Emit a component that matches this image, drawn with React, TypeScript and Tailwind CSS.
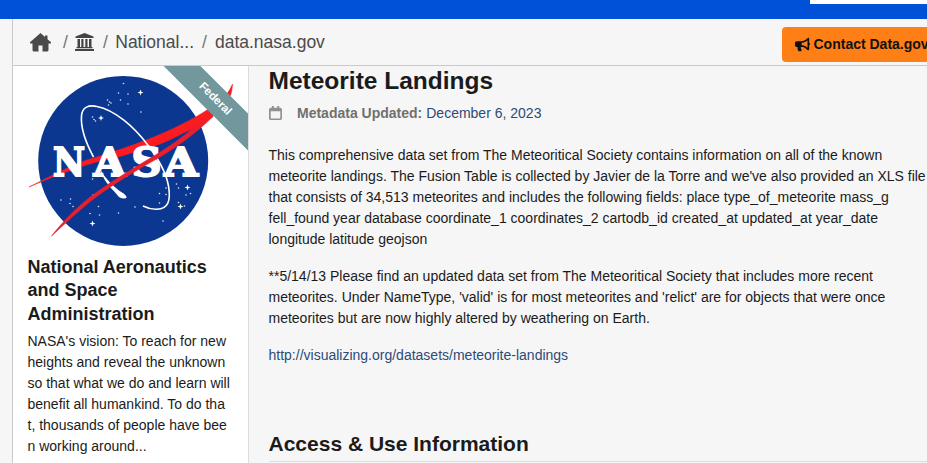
import { FaBullhorn } from "react-icons/fa";

const stars: [number, number][] = [
  [123.5, 83.5], [118.5, 93], [128, 94], [120.5, 100], [128, 104], [141, 112], [107.5, 100], [109.5, 102], [111, 103], [108.5, 105],
  [92.5, 117], [94, 119.5], [95.5, 121], [92.5, 179], [93, 195], [61, 200], [70.5, 199], [70, 203.5], [73, 206.5], [84, 203.5],
  [98.5, 206.5], [90, 213.5], [99.5, 215], [118.5, 213], [135, 207], [163, 221], [166, 188], [166, 194.5], [159.5, 193.5], [159.5, 203],
  [176.5, 184], [178.5, 188], [190.5, 193.5], [186, 195], [178.5, 202.5], [184.5, 206],
];
const brightStars: [number, number][] = [[140.5, 92.5], [101, 118], [92.5, 223.5], [187.5, 187.5], [180.5, 206.5]];

function NasaLogo() {
  return (
    <svg className="block h-[184px] w-[235px]" viewBox="13 66 235 184" role="img" aria-label="NASA">
      <circle cx="123.2" cy="160.9" r="85" fill="#0b3791" />
      {stars.map(([x, y]) => <circle key={`${x}-${y}`} cx={x} cy={y} r="0.8" fill="#dfe6f4" />)}
      {brightStars.map(([x, y]) => (
        <path key={`${x}-${y}`} fill="#fff" transform={`translate(${x} ${y})`} d="M0-3 .8-.8 3 0 .8.8 0 3-.8.8-3 0-.8-.8Z" />
      ))}
      <path fill="#fb1c22" stroke="#fb1c22" strokeWidth="0.5" d="M29 187C51 176 72 165 87 160C110 153 131 146 150 138.5C174 129 193 119 207 110C219 102 227 97 232.5 84C232 96 229 103 212 117C205 122 199 126 191 129.5C180 134 171 140 160 144C147 149 134 152 120 156.5C105 160 90 163 76 168.5C60 174 45 180 29 187Z" />
      <g fill="#fff" stroke="#fff" strokeWidth="2" fontSize="40" fontWeight="700" className="font-['DejaVu_Serif',serif]">
        <text x="53" y="176" textLength="32" lengthAdjust="spacingAndGlyphs">N</text>
        <text x="93.500" y="176" textLength="32" lengthAdjust="spacingAndGlyphs">A</text>
        <text x="131.500" y="176" textLength="30" lengthAdjust="spacingAndGlyphs">S</text>
        <text x="164" y="176" textLength="34" lengthAdjust="spacingAndGlyphs">A</text>
      </g>
      <path fill="none" stroke="#fff" strokeWidth="1.6" d="M93.5 157C86 143 80.500 128 81.500 116C82 107 89 104.500 97 106.500C115 110 134 127 147 144C158 158 166 172 168.500 186C171 201 168 209 157 209.300C152 209.500 147 208 143 206" />
      <path fill="#fff" d="M100 169C105 178 113 186.500 122 192.500C127 195.500 128 198.500 124.500 198.500C120.500 198.500 118.500 197 116.500 194C110 187 103 180 100 169Z" />
      <path fill="#e81f2d" stroke="#e81f2d" strokeWidth="0.6" d="M51.500 236C65 219 80 204 97 192C115 179 134 168 153 156.500C169 147 180 139 192 129C200 124 207 120 213 116.500C195 134 178 146 160 157C139 169 120 180 103 192C83 206 67 222 51.500 236Z" />
    </svg>
  );
}

function HomeIcon() {
  return (
    <svg className="mr-3 h-[19px] w-[21px]" viewBox="0 0 21 19" fill="#4a4a4a">
      <path d="M10.500 0 15 4V2.500H17.500V6.300L21 9.300V10.500H18.500V17Q18.500 18.500 17 18.500H12.500V12.500H8.500V18.500H4Q2.500 18.500 2.500 17V10.500H0V9.300Z" />
    </svg>
  );
}

function BankIcon() {
  return (
    <svg className="h-[18px] w-[19px]" viewBox="0 0 19 18" fill="#444">
      <path d="M9.5 0 18.500 3.500V5H.5V3.500ZM2.500 6H5V14H2.500ZM6.300 6H8.500V14H6.300ZM10.300 6H12.500V14H10.300ZM14 6H16.500V14H14ZM1.500 14H17.500V15.300H1.500ZM0 16H19V18H0Z" />
    </svg>
  );
}

function CalendarIcon() {
  return (
    <svg className="mr-[15.5px] h-[14px] w-[13px]" viewBox="0 0 13 15" preserveAspectRatio="none" fill="#919191">
      <path fillRule="evenodd" d="M2 2H2.800V0H4.800V2H8.200V0H10.200V2H11Q13 2 13 4V13Q13 15 11 15H2Q0 15 0 13V4Q0 2 2 2ZM1.700 5.500V12.500Q1.700 13.300 2.500 13.300H10.500Q11.300 13.300 11.300 12.500V5.500Z" />
    </svg>
  );
}

function Slash() {
  return <span className="text-[#757575]">/</span>;
}

export default function App() {
  return (
    <div className="flex h-[463px] w-[927px] flex-col overflow-hidden bg-[#f6f6f6] font-['Liberation_Sans',Arial,sans-serif] text-[#1b1b1b]">
      <div className="flex h-[19px] shrink-0 items-start justify-end bg-[#0050d8]">
        <div className="h-1 w-[117px] bg-white" />
      </div>
      <div className="ml-3 flex min-h-0 flex-1 flex-col border-l border-[#c9c9c9]">
        <header className="flex h-[47px] shrink-0 items-center justify-between border-b border-[#c9c9c9]">
          <nav className="flex items-center pl-[17px] pt-px text-[17.5px] leading-none text-[#4a4a4a]">
            <HomeIcon />
            <Slash />
            <span className="-mt-[2px] ml-[7px] mr-[9px]"><BankIcon /></span>
            <Slash />
            <span className="ml-[7.5px] mr-[8px]">National...</span>
            <Slash />
            <span className="ml-[8px]">data.nasa.gov</span>
          </nav>
          <button className="mt-[5px] flex h-[35px] w-[145px] shrink-0 items-center rounded-l-[4px] bg-[#ff7f17] pb-px pl-[13px] text-sm font-bold text-[#111] whitespace-nowrap">
            <FaBullhorn className="mr-[3.5px] size-[15px] shrink-0" />
            Contact Data.gov
          </button>
        </header>
        <div className="flex min-h-0 flex-1">
          <aside className="relative w-[236px] shrink-0 overflow-hidden border-r border-[#dcdcdc] bg-white">
            <NasaLogo />
            <div className="absolute left-[122px] top-5 flex h-[26px] w-[160px] rotate-45 items-center justify-center bg-[#72989e] text-[11.5px] font-bold text-white">Federal</div>
            <div className="px-[14.5px]">
              <h2 className="mt-[5.700px] text-[18px] font-bold leading-[23.4px]">National Aeronautics<br />and Space<br />Administration</h2>
              <p className="mt-[5.100px] whitespace-nowrap text-sm leading-[21px]">
                NASA's vision: To reach for new<br />heights and reveal the unknown<br />so that what we do and learn will<br />benefit all humankind. To do tha<br />t, thousands of people have bee<br />n working around...
              </p>
            </div>
          </aside>
          <main className="min-w-0 flex-1 pl-[19.5px]">
            <h1 className="text-[24.500px] font-bold leading-[30px]">Meteorite Landings</h1>
            <div className="mt-[7px] flex h-5 items-center text-sm">
              <CalendarIcon />
              <b className="mr-1 text-[#71706e]">Metadata Updated:</b>
              <span className="text-[#2e4a78]">December 6, 2023</span>
            </div>
            <div className="mt-[22px] whitespace-nowrap text-sm leading-[21px]">
              <p>
                This comprehensive data set from The Meteoritical Society contains information on all of the known<br />meteorite landings. The Fusion Table is collected by Javier de la Torre and we've also provided an XLS file<br />that consists of 34,513 meteorites and includes the following fields: place type_of_meteorite mass_g<br />fell_found year database coordinate_1 coordinates_2 cartodb_id created_at updated_at year_date<br />longitude latitude geojson
              </p>
              <p className="mt-4">
                **5/14/13 Please find an updated data set from The Meteoritical Society that includes more recent<br />meteorites. Under NameType, 'valid' is for most meteorites and 'relict' are for objects that were once<br />meteorites but are now highly altered by weathering on Earth.
              </p>
              <p className="mt-4 text-[#2e4a78]">http://visualizing.org/datasets/meteorite-landings</p>
            </div>
            <h2 className="mt-[65px] border-b border-[#dcdcdc] pb-[4px] text-[21px] font-bold leading-[26px]">Access &amp; Use Information</h2>
          </main>
        </div>
      </div>
    </div>
  );
}
